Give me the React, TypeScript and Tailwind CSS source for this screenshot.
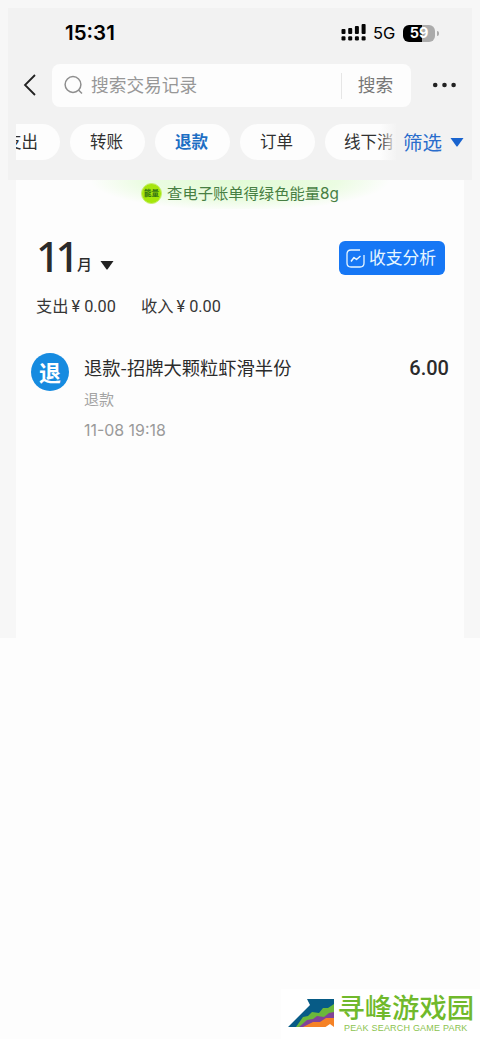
const chips = ["支出", "转账", "退款", "订单"];

const StatusBar = () => {
  return (
    <div className="flex h-[50px] items-center pl-[57px] pr-[33px] text-black">
      <p className="pt-[1px] font-['Inter'] text-[20.5px] font-semibold leading-none">
        15:31
      </p>
      <div className="ml-auto flex items-center">
        <svg width="26" height="18" viewBox="0 0 26 18" fill="#050505">
          <rect x="0.5" y="5" width="4" height="5" rx="1" />
          <rect x="7.2" y="4" width="4" height="6" rx="1" />
          <rect x="13.9" y="2" width="4" height="8" rx="1" />
          <rect x="20.6" y="0" width="4" height="10" rx="1" />
          <rect x="0.5" y="12.3" width="4" height="4.2" rx="1.2" />
          <rect x="7.2" y="12.3" width="4" height="4.2" rx="1.2" />
          <rect x="13.9" y="12.3" width="4" height="4.2" rx="1.2" />
          <rect x="20.6" y="12.3" width="4" height="4.2" rx="1.2" />
        </svg>
        <p className="ml-[6px] w-[23px] whitespace-nowrap pt-[1px] font-['Inter'] text-[16.5px] leading-none">
          5G
        </p>
        <div className="ml-[7px] flex h-[17px] w-[32px] items-center justify-center rounded-[6px] bg-linear-to-r from-black from-60% to-[#ababab] to-60%">
          <span className="font-['Inter'] text-[14.5px] font-bold leading-none text-white">
            59
          </span>
        </div>
        <div className="ml-[2px] h-[5px] w-[2px] rounded-r-full bg-[#ababab]"></div>
      </div>
    </div>
  );
};

const SearchRow = () => {
  return (
    <div className="mt-[6px] flex h-[43px] items-center pl-[15px]">
      <svg className="mb-[2px]" width="14" height="24" viewBox="0 0 14 24" fill="none">
        <path d="M12 2 L2 12 L12 22" stroke="#222222" strokeWidth="1.8" />
      </svg>
      <div className="ml-[15px] flex h-full w-[359px] items-center rounded-[8px] bg-[#fdfdfd] pl-[12px]">
        <svg className="mb-[2px]" width="20" height="20" viewBox="0 0 20 20" fill="none">
          <circle cx="9" cy="9.5" r="7.9" stroke="#8e8e8e" strokeWidth="1.5" />
          <path d="M14.5 15 L18 18.5" stroke="#8e8e8e" strokeWidth="1.5" />
        </svg>
        <p className="ml-[7px] pb-[2px] text-[17.7px] leading-none text-[#979797]">
          搜索交易记录
        </p>
        <div className="ml-auto h-[26px] w-px bg-[#e6e6e6]"></div>
        <p className="w-[69px] pb-[2px] pr-[2px] text-center text-[17.7px] leading-none text-[#777777]">
          搜索
        </p>
      </div>
      <svg
        className="mb-[2px] ml-[21px]"
        width="25"
        height="6"
        viewBox="0 0 25 6"
        fill="#222222"
      >
        <circle cx="3.2" cy="3" r="2.3" />
        <circle cx="12.5" cy="3" r="2.3" />
        <circle cx="21.6" cy="3" r="2.3" />
      </svg>
    </div>
  );
};

const ChipRow = () => {
  return (
    <div className="mt-[16px] flex h-[38px] items-center pl-[8px]">
      <div className="relative h-[38px] w-[380px] overflow-hidden">
        <div className="-ml-[31px] flex h-full items-center gap-[10px]">
          {chips.map((chip) => (
            <div
              key={chip}
              className={
                chip === "退款"
                  ? "flex h-[36px] w-[75px] shrink-0 items-center justify-center rounded-full bg-[#fdfdfd] pb-px pr-[2px] text-[16.5px] font-bold leading-none text-[#1d6fc4]"
                  : "flex h-[36px] w-[75px] shrink-0 items-center justify-center rounded-full bg-[#fdfdfd] pb-px pr-[2px] text-[16.5px] leading-none text-[#303030]"
              }
            >
              {chip}
            </div>
          ))}
          <div className="flex h-[36px] w-[110px] shrink-0 items-center whitespace-nowrap rounded-full bg-[#fdfdfd] pb-px pl-[19px] text-[16.5px] leading-none text-[#303030]">
            线下消
          </div>
        </div>
        <div className="absolute right-0 top-0 h-full w-[16px] bg-linear-to-r from-[#f3f3f3]/0 to-[#f3f3f3]"></div>
      </div>
      <p className="ml-[7px] whitespace-nowrap pb-px text-[19.5px] leading-none text-[#2a6dcc]">
        筛选
      </p>
      <svg className="ml-[8px]" width="14" height="9" viewBox="0 0 14 9">
        <path d="M0.5 0 H13.5 L7.8 8 Q7 9 6.2 8 Z" fill="#1964cf" />
      </svg>
    </div>
  );
};

const EnergyBanner = () => {
  return (
    <div className="flex h-[29px] w-[300px] items-center justify-center self-center bg-[radial-gradient(ellipse_150px_31px_at_50%_0%,#e2fbd6_0%,#ebfce2_65%,#fdfdfd_100%)] pb-[3px]">
      <div className="flex size-[21px] items-center justify-center rounded-full border border-[#c5f06a] bg-[#a5e60b]">
        <span className="whitespace-nowrap text-[7.5px] font-black leading-none text-[#397a12]">
          能量
        </span>
      </div>
      <p className="ml-[5px] whitespace-nowrap text-[15.3px] leading-none text-[#477f43]">
        查电子账单得绿色能量<span className="font-['Inter']">8g</span>
      </p>
    </div>
  );
};

const MonthSummary = () => {
  return (
    <div className="mt-[28px] flex flex-col pl-[20px] pr-[19px]">
      <div className="flex h-[42px] items-center">
        <p className="w-[41px] pb-[5px] font-['Noto_Sans'] text-[42px] font-medium leading-none tracking-[-4.5px] text-[#2b2b2b]">
          11
        </p>
        <p className="mt-[11px] text-[15px] font-medium leading-none text-[#2b2b2b]">
          月
        </p>
        <svg className="ml-[8px] mt-[15px]" width="14" height="9" viewBox="0 0 14 9">
          <path d="M0.5 0 H13.5 L7.8 8 Q7 9 6.2 8 Z" fill="#222222" />
        </svg>
        <button
          type="button"
          className="ml-auto flex h-[34px] w-[106px] items-center rounded-[6px] bg-[#1677f5] pl-[7px] text-[#e7f6ff]"
        >
          <svg width="19" height="19" viewBox="0 0 19 19" fill="none" stroke="currentColor">
            <path
              d="M14 1 H5 Q1 1 1 5 V14 Q1 18 5 18 H14 Q18 18 18 14 V6"
              strokeWidth="1.3"
            />
            <path
              d="M5 12.5 L8 8.5 L10.5 10.5 L14.5 7"
              strokeWidth="1.5"
              strokeLinejoin="round"
            />
          </svg>
          <span className="ml-[4px] whitespace-nowrap pb-px text-[16.8px] leading-none">
            收支分析
          </span>
        </button>
      </div>
      <div className="mt-[17px] flex h-[20px] items-center text-[16.3px] leading-none text-[#363636]">
        <p className="w-[105px] whitespace-nowrap">
          支出<span className="ml-[3px] font-['Roboto']">¥ 0.00</span>
        </p>
        <p className="whitespace-nowrap">
          收入<span className="ml-[3px] font-['Roboto']">¥ 0.00</span>
        </p>
      </div>
    </div>
  );
};

const RecordItem = () => {
  return (
    <div className="mt-[37px] flex pl-[15px] pr-[15px]">
      <div className="flex size-[38px] items-center justify-center rounded-full bg-[#168be0] pb-[3px]">
        <span className="text-[22px] font-bold leading-none text-white">退</span>
      </div>
      <div className="ml-[15px] flex flex-col">
        <p className="mt-[4px] whitespace-nowrap text-[18.3px] leading-[20px] text-[#2b2b2b]">
          退款-招牌大颗粒虾滑半份
        </p>
        <p className="mt-[12px] text-[15px] leading-[20px] text-[#a3a3a3]">退款</p>
        <p className="mt-[12px] whitespace-nowrap font-['Inter'] text-[15.9px] leading-[20px] text-[#9a9a9a]">
          11-08 19:18
        </p>
      </div>
      <p className="ml-auto mt-[5px] font-['Roboto'] text-[20px] font-medium leading-[20px] text-[#2b2b2b]">
        6.00
      </p>
    </div>
  );
};

const Watermark = () => {
  return (
    <div className="mt-auto flex h-[50px] items-start self-end bg-white pl-[7px] pr-[6px] pt-[2px]">
      <svg className="mt-[8px]" width="48" height="29" viewBox="0 0 48 29">
        <path d="M19 0 H46 V28 H0 L22 6 Z" fill="#075b86" />
        <path d="M8 28 L15 18 L20 17 L24 13 L31 14 L35 9 L40 9 L46 5 V28 Z" fill="#6bb83a" />
        <path d="M11 28 L19 21 L25 20 L29 17 L36 18 L41 14 L46 13 V28 Z" fill="#81439a" />
        <path d="M15 28 L25 23 L32 23 L38 19 L46 19 V28 Z" fill="#f58226" />
        <path d="M36 29 L42 25 L46 28 V29 Z" fill="#ffffff" />
      </svg>
      <div className="ml-[2px] flex flex-col items-center">
        <p className="whitespace-nowrap text-[27.3px] font-medium leading-[30px] text-[#70b92c]">
          寻峰游戏园
        </p>
        <p className="mt-[2px] whitespace-nowrap font-['Liberation_Sans'] text-[9px] leading-[10px] tracking-[0.2px] text-[#8bc34f]">
          PEAK SEARCH GAME PARK
        </p>
      </div>
    </div>
  );
};

const App = () => {
  return (
    <div className="flex h-[1039px] w-[480px] flex-col overflow-hidden bg-[#fdfdfd] font-['Noto_Sans_CJK_SC',sans-serif]">
      <div className="flex h-[638px] flex-col bg-[#f7f7f7] px-[8px] pt-[8px]">
        <div className="h-[172px] bg-[#f2f2f2]">
          <StatusBar />
          <SearchRow />
          <ChipRow />
        </div>
        <div className="mx-[8px] flex grow flex-col bg-[#fdfdfd]">
          <EnergyBanner />
          <MonthSummary />
          <RecordItem />
        </div>
      </div>
      <Watermark />
    </div>
  );
};

export default App;
